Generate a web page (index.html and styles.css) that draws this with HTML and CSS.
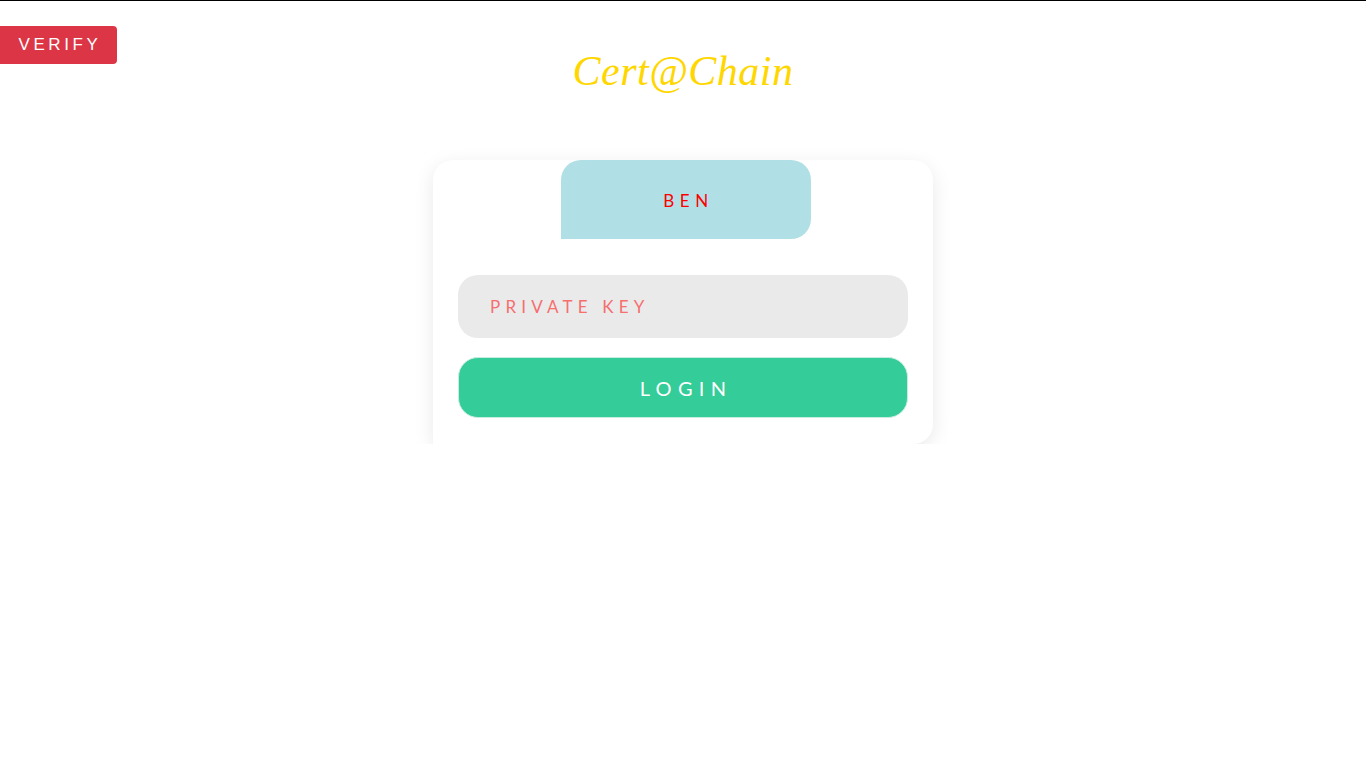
FILE: index.html
```html
<!DOCTYPE html>
<html lang="en">
<head>
<meta charset="utf-8">
<title>Cert@Chain</title>
<link rel="stylesheet" href="styles.css">
</head>
<body>
<header class="top">
  <div class="top-left"><button class="verify">VERIFY</button></div>
  <h1 class="brand">Cert@Chain</h1>
  <div></div>
</header>
<main class="card">
  <div class="tab">BEN</div>
  <form class="form">
    <input class="key" type="text" placeholder="PRIVATE KEY">
    <button type="button" class="login">LOGIN</button>
  </form>
</main>
</body>
</html>
```
FILE: styles.css
```css
html, body { margin: 0; padding: 0; background: #fff; }
body { border-top: 1px solid #000; font-family: "Lato", "Open Sans", sans-serif; }
.top {
  display: grid;
  grid-template-columns: 1fr auto 1fr;
  align-items: start;
  padding-top: 25px;
}
.verify {
  height: 38px;
  width: 117px;
  padding: 0;
  border: none;
  border-radius: 0 4px 4px 0;
  background: #dc3545;
  color: #fff;
  font-family: "Liberation Sans", Arial, sans-serif;
  font-size: 17px;
  letter-spacing: 3.6px;
  text-indent: 3px;
}
.brand {
  margin: 21px 0 0;
  font-family: "Liberation Serif", Georgia, serif;
  font-style: italic;
  font-weight: normal;
  font-size: 42px;
  line-height: 48px;
  color: #ffd700;
  letter-spacing: 0.5px;
}
.card {
  width: 500px;
  box-sizing: border-box;
  margin: 65px auto 0;
  padding: 0 25px 26px;
  background: #fff;
  border-radius: 20px 20px 20px 0;
  box-shadow: 0 5px 20px rgba(0,0,0,0.09);
}
.tab {
  width: 250px;
  height: 79px;
  margin: 0 0 0 103px;
  display: flex;
  align-items: center;
  justify-content: center;
  background: #b0dfe5;
  border-radius: 20px 20px 20px 0;
  color: #ff0000;
  font-size: 17px;
  letter-spacing: 5.5px;
  text-indent: 5px;
  padding-top: 2px;
  box-sizing: border-box;
}
.form {
  display: flex;
  flex-direction: column;
  gap: 19px;
  margin-top: 36px;
}
.key {
  height: 63px;
  box-sizing: border-box;
  border: none;
  border-radius: 20px;
  background: #eaeaea;
  padding: 0 32px;
  font-family: inherit;
  font-size: 17px;
  letter-spacing: 5.2px;
  outline: none;
}
.key::placeholder { color: #f56f6f; opacity: 1; }
.login {
  height: 61px;
  border: 1px solid #c8ecdf;
  border-radius: 20px;
  background: #34cc98;
  color: #fff;
  font-family: inherit;
  font-size: 20px;
  letter-spacing: 6.3px;
  text-indent: 6px;
  cursor: pointer;
}
```
